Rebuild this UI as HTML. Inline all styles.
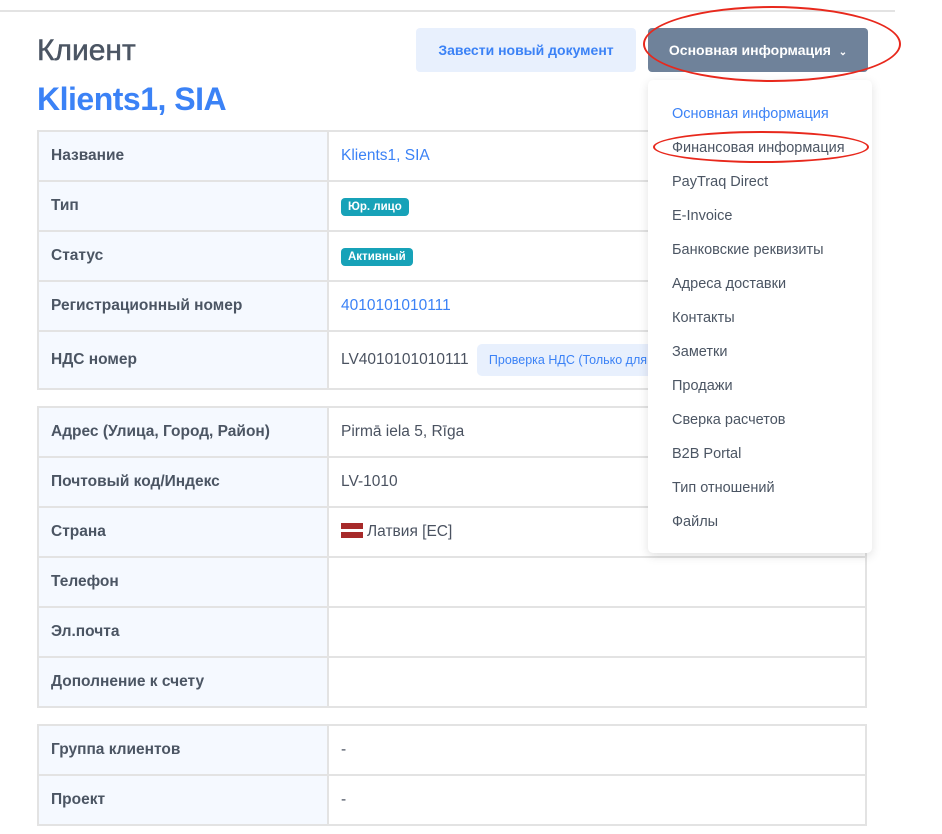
<!DOCTYPE html>
<html><head><meta charset="utf-8"><style>
*{box-sizing:border-box;margin:0;padding:0}
body{width:942px;height:834px;overflow:hidden;background:#fff;font-family:"Liberation Sans","Noto Sans CJK SC",sans-serif;color:#4a5260;position:relative}
.topline{position:absolute;left:0;top:10px;width:895px;height:2px;background:#e3e3e3}
h1{position:absolute;left:37px;top:34px;font-size:30px;font-weight:normal;color:#4b5563;-webkit-text-stroke:0.5px #4b5563}
h2{position:absolute;left:37px;top:81px;font-size:32px;font-weight:bold;color:#3b82f6;letter-spacing:-0.5px}
table{position:absolute;left:37px;width:830px;border-collapse:collapse}
td{border:2px solid #e3e3e3;height:50px;font-size:15.5px;padding:0 12px;vertical-align:middle}
td.l{width:290px;background:#f5f9ff;font-weight:bold;color:#4b5563}
a{color:#3b82f6;text-decoration:none}
.badge{display:inline-block;background:#17a2b8;color:#fff;font-size:11.5px;font-weight:bold;padding:3px 7px;border-radius:4px}
.vat{display:inline-block;background:#e8f0fd;color:#3b82f6;font-size:12.5px;padding:9px 12px;border-radius:5px;margin-left:4px;vertical-align:middle}
.btn1{position:absolute;left:416px;top:28px;width:220px;height:44px;background:#e8f0fd;color:#3b82f6;border-radius:4px;font-size:14px;font-weight:bold;text-align:center;line-height:44px}
.btn2{position:absolute;left:648px;top:28px;width:220px;height:44px;background:#6f829a;color:#fff;border-radius:4px;font-size:14px;font-weight:bold;text-align:center;line-height:44px}
.menu{position:absolute;left:648px;top:80px;width:224px;height:473px;background:#fff;border-radius:5px;box-shadow:0 3px 10px rgba(0,0,0,.12);padding-top:23px}
.menu div{height:34px;line-height:22px;padding-left:24px;font-size:14.5px;color:#4b5563}
.ell{position:absolute;border:2px solid #e8281c;border-radius:50%}
.flag{display:inline-block;width:22px;height:15px;background:linear-gradient(#a72a2a 0 40%,#fff 40% 60%,#a72a2a 60%);vertical-align:-2px;margin-right:4px}
</style></head><body>
<div class="topline"></div>
<h1>Клиент</h1>
<h2>Klients1, SIA</h2>
<div class="btn1">Завести новый документ</div>
<div class="btn2">Основная информация &nbsp;<span style="font-size:10px">&#8964;</span></div>

<table style="top:130px">
<tr><td class="l">Название</td><td><a>Klients1, SIA</a></td></tr>
<tr><td class="l">Тип</td><td><span class="badge">Юр. лицо</span></td></tr>
<tr><td class="l">Статус</td><td><span class="badge">Активный</span></td></tr>
<tr><td class="l">Регистрационный номер</td><td><a>4010101010111</a></td></tr>
<tr><td class="l" style="height:58px">НДС номер</td><td>LV4010101010111 <span class="vat">Проверка НДС (Только для ЕС)</span></td></tr>
</table>

<table style="top:406px">
<tr><td class="l">Адрес (Улица, Город, Район)</td><td>Pirmā iela 5, Rīga</td></tr>
<tr><td class="l">Почтовый код/Индекс</td><td>LV-1010</td></tr>
<tr><td class="l">Страна</td><td><span class="flag"></span>Латвия [EC]</td></tr>
<tr><td class="l">Телефон</td><td></td></tr>
<tr><td class="l">Эл.почта</td><td></td></tr>
<tr><td class="l">Дополнение к счету</td><td></td></tr>
</table>

<table style="top:724px">
<tr><td class="l">Группа клиентов</td><td>-</td></tr>
<tr><td class="l">Проект</td><td>-</td></tr>
</table>

<div class="menu">
<div style="color:#3b82f6">Основная информация</div>
<div>Финансовая информация</div>
<div>PayTraq Direct</div>
<div>E-Invoice</div>
<div>Банковские реквизиты</div>
<div>Адреса доставки</div>
<div>Контакты</div>
<div>Заметки</div>
<div>Продажи</div>
<div>Сверка расчетов</div>
<div>B2B Portal</div>
<div>Тип отношений</div>
<div>Файлы</div>
</div>
<div class="ell" style="left:643px;top:6px;width:258px;height:76px"></div>
<div class="ell" style="left:653px;top:131px;width:216px;height:32px"></div>
</body></html>
